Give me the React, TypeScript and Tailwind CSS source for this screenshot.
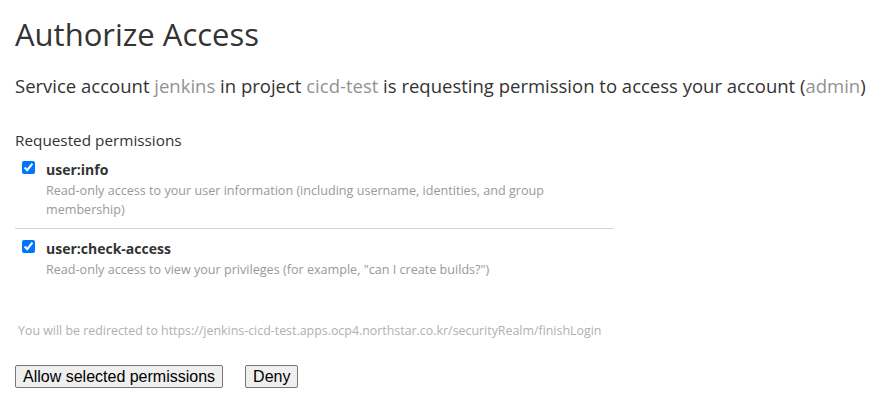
const permissions = [
  {
    name: 'user:info',
    description:
      'Read-only access to your user information (including username, identities, and group membership)',
  },
  {
    name: 'user:check-access',
    description: 'Read-only access to view your privileges (for example, "can I create builds?")',
  },
]

export default function App() {
  return (
    <div className="min-h-screen bg-white px-[15px] pt-[11px] text-[#333] [font-family:'Open_Sans',sans-serif]">
      <h1 className="text-[31px] leading-[46px] font-normal">Authorize Access</h1>
      <p className="mt-[16px] text-[18.5px] leading-[26px]">
        Service account <span className="text-[#929292]">jenkins</span> in project{' '}
        <span className="text-[#929292]">cicd-test</span> is requesting permission to access your account (
        <span className="text-[#929292]">admin</span>)
      </p>

      <form className="mt-[30px]">
        <h3 className="text-[15.3px] leading-[22px]">Requested permissions</h3>
        <div className="mt-[9px] w-[599px]">
          {permissions.map((p, i) => (
            <div key={p.name} className={i > 0 ? 'border-t border-[#d6d6d6] pt-[10px]' : 'pb-[9px]'}>
              <label className="flex items-start gap-[11px] pl-[7px]">
                <input type="checkbox" defaultChecked className="mt-[1px] h-[13px] w-[13px] accent-[#0075ff]" />
                <div>
                  <div className="text-[14px] font-bold leading-[20px]">{p.name}</div>
                  <div className="mt-[1px] text-[12.6px] leading-[19px] text-[#999]">{p.description}</div>
                </div>
              </label>
            </div>
          ))}
        </div>

        <p className="mt-[43px] pl-[3px] text-[12.4px] leading-[18px] text-[#b0b0b0]">
          You will be redirected to https://jenkins-cicd-test.apps.ocp4.northstar.co.kr/securityRealm/finishLogin
        </p>

        <div className="mt-[25px] flex gap-[22px] [font-family:'Liberation_Sans',Arial,sans-serif]">
          <button type="button" className="rounded-[2px] border border-[#767676] bg-[#efefef] px-[7px] py-[1px] text-[16px] leading-[19px] text-black">
            Allow selected permissions
          </button>
          <button type="button" className="rounded-[2px] border border-[#767676] bg-[#efefef] px-[7px] py-[1px] text-[16px] leading-[19px] text-black">
            Deny
          </button>
        </div>
      </form>
    </div>
  )
}
